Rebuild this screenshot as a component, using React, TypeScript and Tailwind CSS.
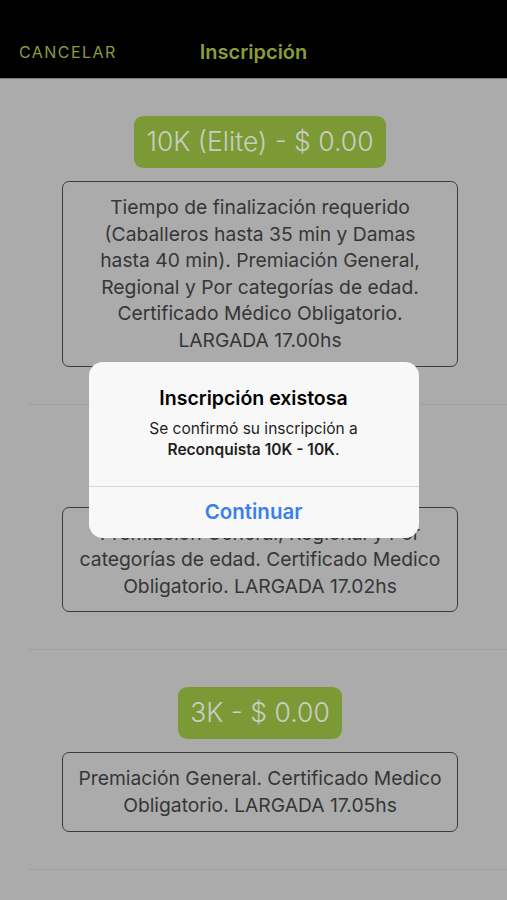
import React from 'react';

interface Distance {
  id: string;
  label: string;
  lines: string[];
}

const distances: Distance[] = [
  {
    id: '10k-elite',
    label: '10K (Elite) - $ 0.00',
    lines: [
      'Tiempo de finalización requerido',
      '(Caballeros hasta 35 min y Damas',
      'hasta 40 min). Premiación General,',
      'Regional y Por categorías de edad.',
      'Certificado Médico Obligatorio.',
      'LARGADA 17.00hs',
    ],
  },
  {
    id: '10k',
    label: '10K - $ 0.00',
    lines: [
      'Premiación General, Regional y Por',
      'categorías de edad. Certificado Medico',
      'Obligatorio. LARGADA 17.02hs',
    ],
  },
  {
    id: '3k',
    label: '3K - $ 0.00',
    lines: ['Premiación General. Certificado Medico', 'Obligatorio. LARGADA 17.05hs'],
  },
];

const font = { fontFamily: 'Inter, "Noto Sans", sans-serif' };

const DistanceRow: React.FC<{ distance: Distance }> = ({ distance }) => (
  <div className="ml-[28px] border-b border-[#a0a0a0] pt-[37px] pb-[37px]">
    <div className="flex flex-col items-center pr-[15px]">
      <div className="h-[52px] px-3 rounded-[9px] bg-[#7b9a35] flex items-center text-[26.5px] font-light text-[#c9cdc3] whitespace-nowrap">
        {distance.label}
      </div>
      <div className="mt-[13px] w-[396px] rounded-[7px] border-[1.5px] border-[#3c3c3c] py-[12px] text-center text-[19.3px] leading-[26.6px] text-[#363636]">
        {distance.lines.map((line) => (
          <span key={line} className="block whitespace-nowrap">
            {line}
          </span>
        ))}
      </div>
    </div>
  </div>
);

const App: React.FC = () => {
  return (
    <div className="relative w-full h-[900px] overflow-hidden bg-[#ababab]" style={font}>
      <header className="h-[79px] bg-black border-b border-[#7c7c7c] pt-[30px]">
        <div className="h-[44px] grid grid-cols-[1fr_auto_1fr] items-center">
          <span className="pl-[19px] text-[16px] tracking-[0.09em] text-[#8a9c3c]">CANCELAR</span>
          <h1 className="text-[20px] font-semibold text-[#8a9c3c]">Inscripción</h1>
          <span />
        </div>
      </header>

      <div>
        {distances.map((d) => (
          <DistanceRow key={d.id} distance={d} />
        ))}
      </div>

      <div className="absolute inset-0 flex items-center justify-center">
        <div className="w-[330px] rounded-[14px] bg-[#f8f8f8] text-center">
          <div className="pt-[24px] pb-[26px] px-4">
            <h2 className="text-[19.5px] leading-[24px] font-semibold text-black">Inscripción existosa</h2>
            <p className="mt-[8px] text-[15.5px] leading-[21px] text-[#1f1f1f]">
              Se confirmó su inscripción a
              <br />
              <span className="font-semibold">Reconquista 10K - 10K</span>.
            </p>
          </div>
          <button className="w-full h-[52px] border-t border-[#d6d6d6] text-[20.5px] font-semibold text-[#3a7fef]">
            Continuar
          </button>
        </div>
      </div>
    </div>
  );
};

export default App;
